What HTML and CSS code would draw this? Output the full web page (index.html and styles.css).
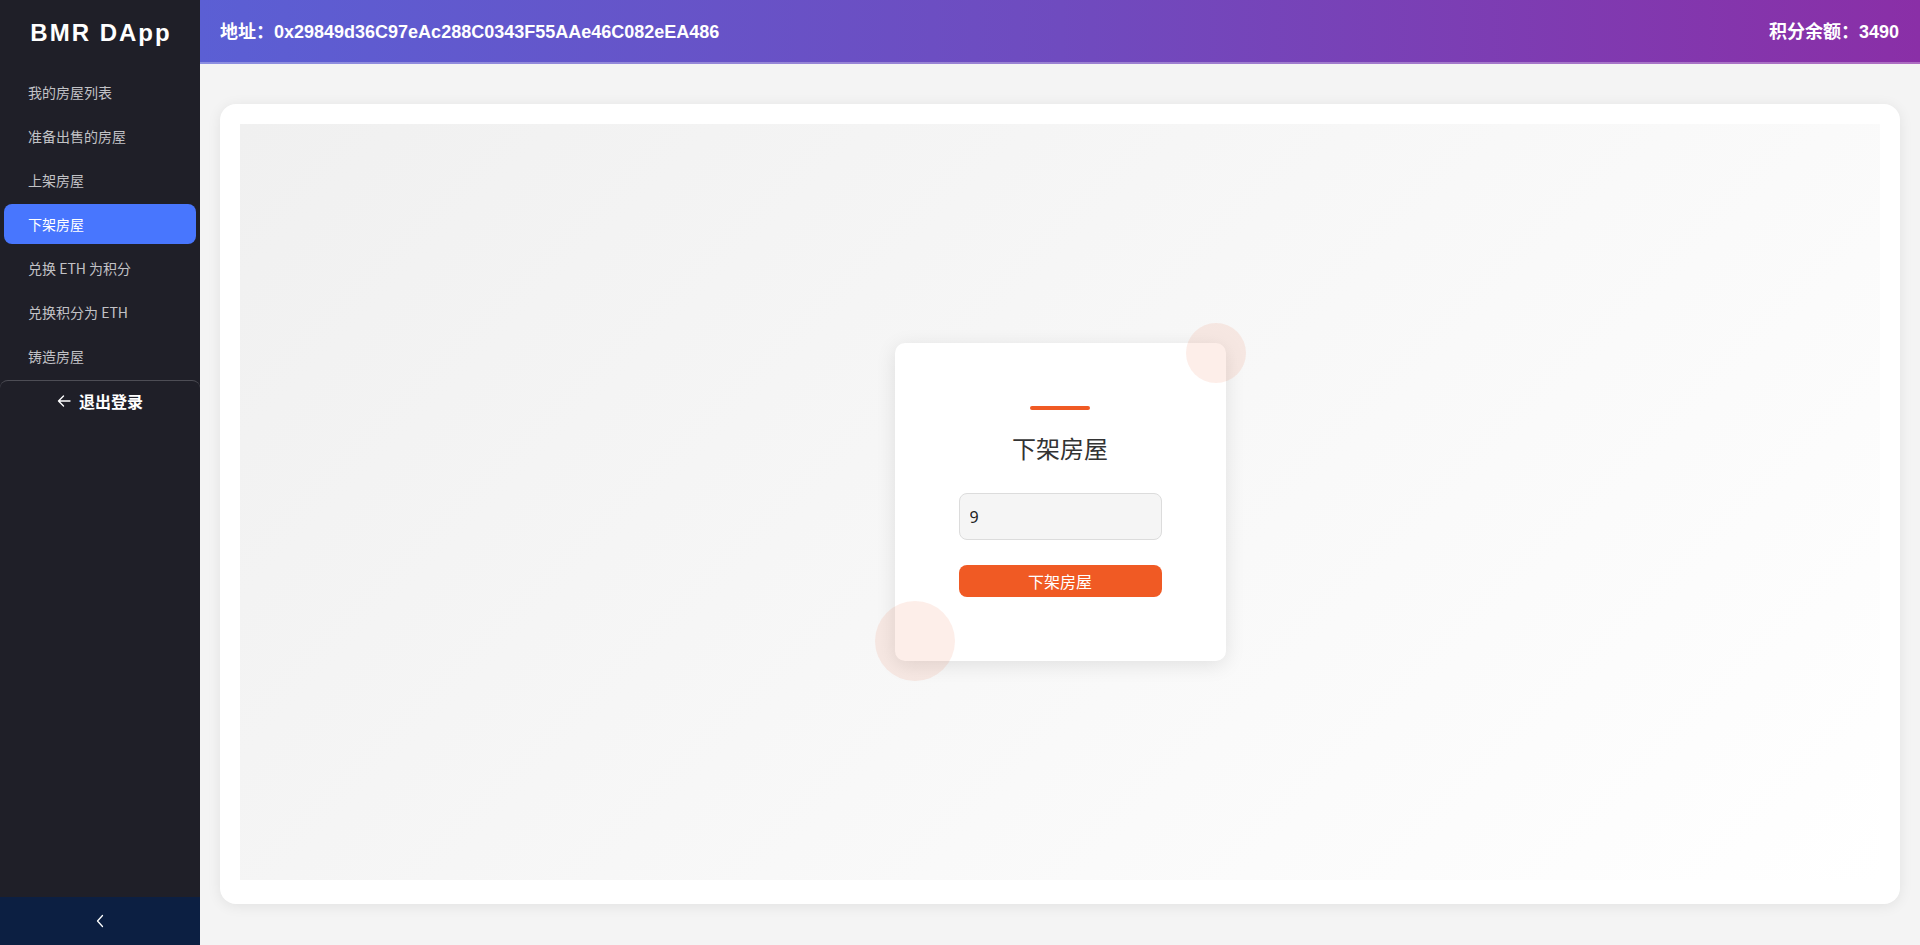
FILE: index.html
```html
<!DOCTYPE html>
<html lang="zh-CN">
<head>
<meta charset="utf-8">
<title>BMR DApp</title>
<link rel="stylesheet" href="styles.css">
</head>
<body>
<div class="app">
  <aside class="sidebar">
    <div class="brand">BMR DApp</div>
    <nav class="menu">
      <a class="menu-item">我的房屋列表</a>
      <a class="menu-item">准备出售的房屋</a>
      <a class="menu-item">上架房屋</a>
      <a class="menu-item active">下架房屋</a>
      <a class="menu-item">兑换 ETH 为积分</a>
      <a class="menu-item">兑换积分为 ETH</a>
      <a class="menu-item">铸造房屋</a>
    </nav>
    <div class="logout">
      <svg class="logout-icon" width="14" height="14" viewBox="0 0 14 14"><path d="M13 7H1.5M6.5 2L1.5 7l5 5" fill="none" stroke="#ffffff" stroke-width="1.4" stroke-linecap="round" stroke-linejoin="round"/></svg>
      <span>退出登录</span>
    </div>
    <div class="collapse">
      <svg width="10" height="14" viewBox="0 0 10 14"><path d="M7.5 1.5L2.5 7l5 5.5" fill="none" stroke="#ffffff" stroke-width="1.3" stroke-linecap="round" stroke-linejoin="round"/></svg>
    </div>
  </aside>
  <div class="main">
    <header class="topbar">
      <div class="address">地址：0x29849d36C97eAc288C0343F55AAe46C082eEA486</div>
      <div class="balance">积分余额：3490</div>
    </header>
    <section class="content">
      <div class="panel">
        <div class="stage">
          <div class="form-card">
            <span class="bubble bubble-top"></span>
            <span class="bubble bubble-bottom"></span>
            <div class="accent"></div>
            <h2 class="form-title">下架房屋</h2>
            <input class="field" type="text" value="9">
            <button class="submit">下架房屋</button>
          </div>
        </div>
      </div>
    </section>
  </div>
</div>
</body>
</html>
```

FILE: styles.css
```css
* { box-sizing: border-box; }
html, body { margin: 0; padding: 0; }
body {
  font-family: "Liberation Sans", "Noto Sans CJK SC", sans-serif;
  background: #f4f4f4;
}
.app {
  display: flex;
  width: 100%;
  height: 945px;
}
.sidebar {
  width: 200px;
  flex: 0 0 200px;
  background: #1f1f28;
  display: flex;
  flex-direction: column;
}
.brand {
  height: 72px;
  display: flex;
  align-items: center;
  justify-content: center;
  padding-left: 2px;
  padding-bottom: 6px;
  color: #ffffff;
  font-weight: bold;
  font-size: 24px;
  letter-spacing: 2px;
  font-family: "Liberation Sans", Arial, sans-serif;
}
.menu {
  display: flex;
  flex-direction: column;
  gap: 4px;
}
.menu-item {
  display: flex;
  align-items: center;
  height: 40px;
  margin: 0 4px;
  padding-left: 24px;
  padding-bottom: 1px;
  border-radius: 8px;
  color: #c2c2c6;
  font-size: 14px;
  font-family: "Noto Sans CJK SC", "Noto Sans", sans-serif;
}
.menu-item.active {
  background: #4876fe;
  color: #ffffff;
}
.logout {
  margin-top: 4px;
  height: 40px;
  border-top: 1px solid #4d4d55;
  border-radius: 8px 8px 0 0;
  display: flex;
  align-items: center;
  justify-content: center;
  gap: 8px;
  color: #ffffff;
  font-weight: bold;
  font-size: 16px;
  font-family: "Noto Sans CJK SC", sans-serif;
}
.logout-icon { margin-top: 1px; }
.collapse {
  margin-top: auto;
  height: 48px;
  background: #0c1f42;
  display: flex;
  align-items: center;
  justify-content: center;
}
.main {
  flex: 1;
  display: flex;
  flex-direction: column;
  min-width: 0;
}
.topbar {
  height: 64px;
  flex: 0 0 64px;
  display: flex;
  align-items: center;
  justify-content: space-between;
  padding: 0 21px 2px 20px;
  background: linear-gradient(90deg, #5b5fd4 0%, #6f4bbf 50%, #8a2fa7 100%);
  border-bottom: 2px solid rgba(255, 255, 255, 0.3);
  color: #ffffff;
  font-weight: bold;
  font-size: 18px;
  font-family: "Liberation Sans", "Noto Sans CJK SC", sans-serif;
}
.content {
  flex: 1;
  padding: 40px 20px 41px;
  display: flex;
}
.panel {
  flex: 1;
  background: #ffffff;
  border-radius: 16px;
  padding: 20px 20px 24px;
  box-shadow: 0 2px 14px rgba(0, 0, 0, 0.08);
  display: flex;
}
.stage {
  flex: 1;
  background: linear-gradient(135deg, #f0f0f0 0%, #ffffff 100%);
  display: flex;
  align-items: center;
  justify-content: center;
}
.form-card {
  position: relative;
  width: 331px;
  background: #ffffff;
  border-radius: 10px;
  padding: 63px 64px 64px;
  box-shadow: 0 4px 20px rgba(0, 0, 0, 0.1);
  display: flex;
  flex-direction: column;
  align-items: center;
}
.bubble {
  position: absolute;
  border-radius: 50%;
  background: rgba(240, 90, 36, 0.1);
}
.bubble-top {
  width: 60px;
  height: 60px;
  top: -20px;
  right: -20px;
}
.bubble-bottom {
  width: 80px;
  height: 80px;
  bottom: -20px;
  left: -20px;
}
.accent {
  width: 60px;
  height: 4px;
  border-radius: 2px;
  background: #f05a24;
}
.form-title {
  margin: 22px 0 29px;
  height: 32px;
  line-height: 32px;
  font-size: 24px;
  font-weight: normal;
  color: #333333;
  font-family: "Noto Sans CJK SC", sans-serif;
}
.field {
  width: 100%;
  height: 47px;
  border: 1px solid #dcdcdc;
  border-radius: 8px;
  background: #f5f5f5;
  padding: 0 10px;
  font-size: 16px;
  color: #222222;
  font-family: "Noto Sans", sans-serif;
  outline: none;
}
.submit {
  margin-top: 25px;
  width: 100%;
  height: 32px;
  border: none;
  border-radius: 8px;
  background: #f05a24;
  color: #ffffff;
  font-size: 16px;
  font-family: "Noto Sans CJK SC", sans-serif;
  padding: 0;
}
```
